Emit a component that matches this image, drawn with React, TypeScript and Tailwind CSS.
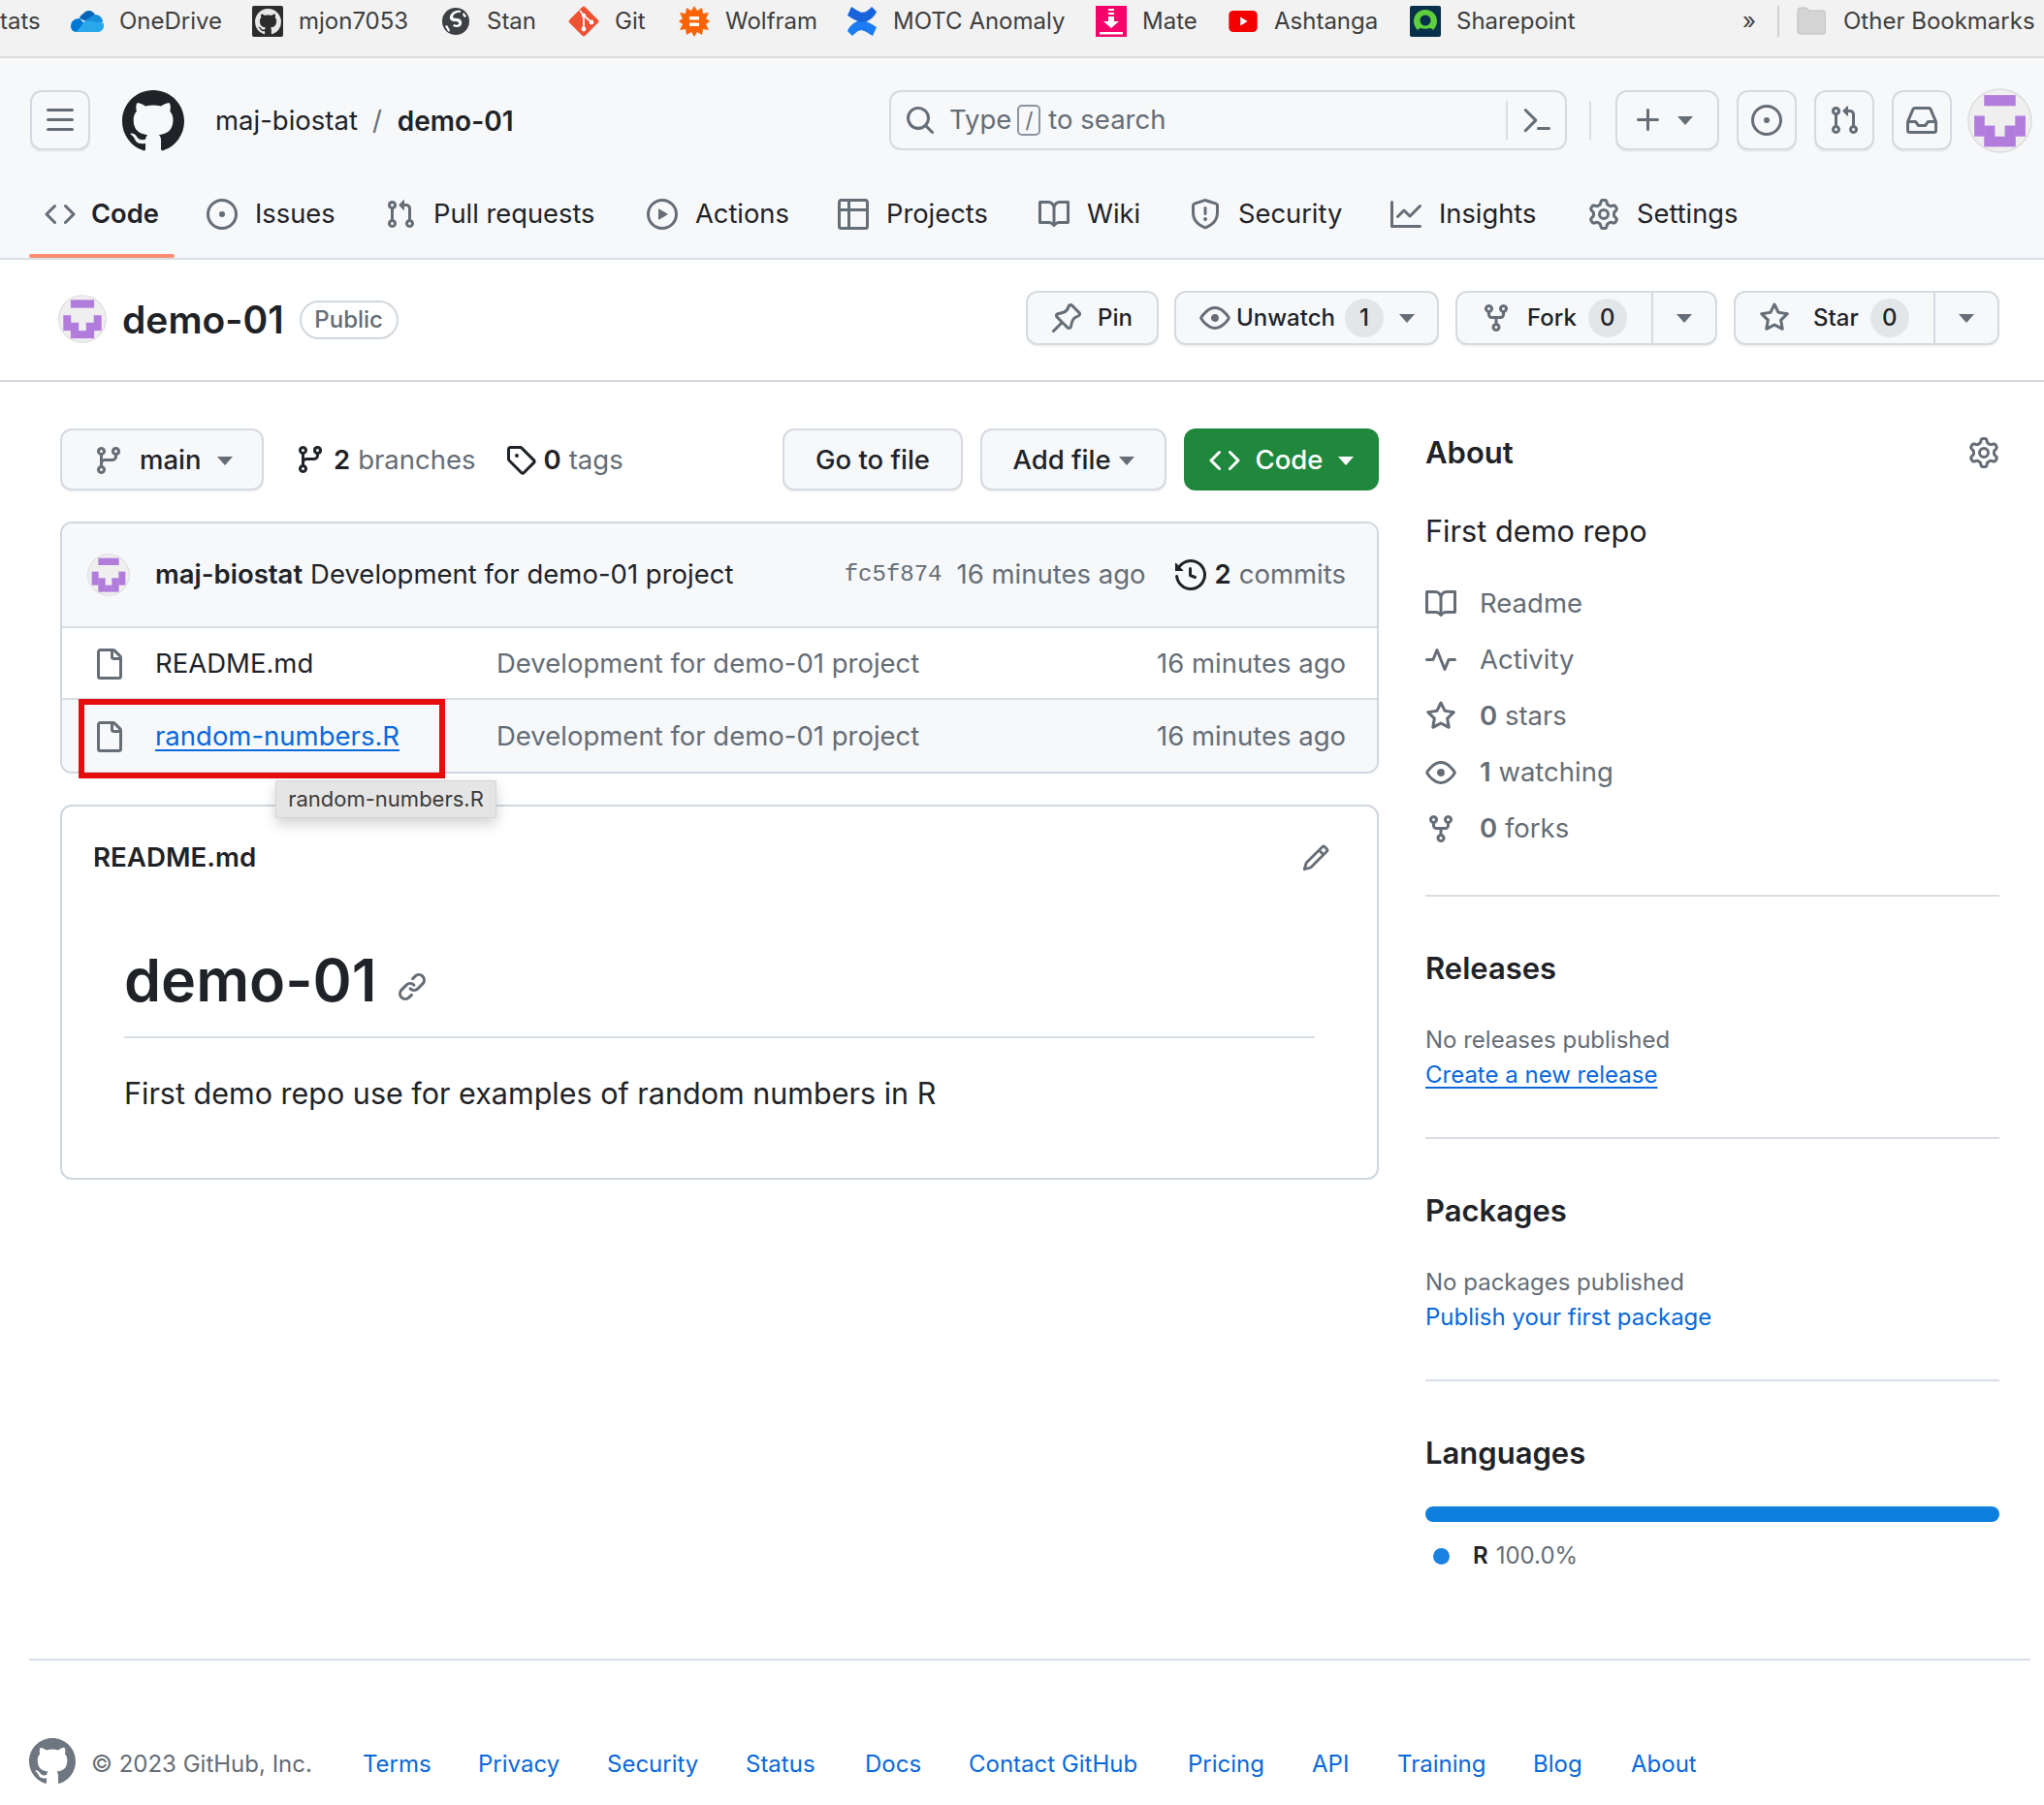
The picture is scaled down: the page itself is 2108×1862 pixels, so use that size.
import React from "react";

const font = { fontFamily: "Inter, 'Liberation Sans', sans-serif" };

const paths: Record<string, string> = {
  github: "M8 0c4.42 0 8 3.58 8 8a8.013 8.013 0 0 1-5.45 7.59c-.4.08-.55-.17-.55-.38 0-.27.01-1.13.01-2.2 0-.75-.25-1.23-.54-1.48 1.78-.2 3.65-.88 3.65-3.95 0-.88-.31-1.59-.82-2.15.08-.2.36-1.02-.08-2.12 0 0-.67-.22-2.2.82-.64-.18-1.32-.27-2-.27-.68 0-1.36.09-2 .27-1.53-1.03-2.2-.82-2.2-.82-.44 1.1-.16 1.92-.08 2.12-.51.56-.82 1.28-.82 2.15 0 3.06 1.86 3.75 3.64 3.95-.23.2-.44.55-.51 1.07-.46.21-1.61.55-2.33-.66-.15-.24-.6-.83-1.23-.82-.67.01-.27.38.01.53.34.19.73.9.82 1.13.16.45.68 1.31 2.69.94 0 .67.01 1.3.01 1.49 0 .21-.15.45-.55.38A7.995 7.995 0 0 1 0 8c0-4.42 3.58-8 8-8Z",
  bars: "M1 2.75A.75.75 0 0 1 1.75 2h12.5a.75.75 0 0 1 0 1.5H1.75A.75.75 0 0 1 1 2.75Zm0 5A.75.75 0 0 1 1.75 7h12.5a.75.75 0 0 1 0 1.5H1.75A.75.75 0 0 1 1 7.75ZM1.75 12h12.5a.75.75 0 0 1 0 1.5H1.75a.75.75 0 0 1 0-1.5Z",
  palette: "m6.354 8.04-4.773 4.773a.75.75 0 1 0 1.061 1.06L7.945 8.57a.75.75 0 0 0 0-1.06L2.642 2.206a.75.75 0 0 0-1.06 1.061L6.353 8.04ZM8.75 11.5a.75.75 0 0 0 0 1.5h5.5a.75.75 0 0 0 0-1.5h-5.5Z",
  code: "m11.28 3.22 4.25 4.25a.75.75 0 0 1 0 1.06l-4.25 4.25a.749.749 0 0 1-1.275-.326.749.749 0 0 1 .215-.734L13.94 8l-3.72-3.72a.749.749 0 0 1 .326-1.275.749.749 0 0 1 .734.215Zm-6.56 0a.751.751 0 0 1 1.042.018.751.751 0 0 1 .018 1.042L2.06 8l3.72 3.72a.749.749 0 0 1-.326 1.275.749.749 0 0 1-.734-.215L.47 8.53a.75.75 0 0 1 0-1.06Z",
  issue: "M8 9.5a1.5 1.5 0 1 0 0-3 1.5 1.5 0 0 0 0 3ZM8 0a8 8 0 1 1 0 16A8 8 0 0 1 8 0ZM1.5 8a6.5 6.5 0 1 0 13 0 6.5 6.5 0 0 0-13 0Z",
  pr: "M1.5 3.25a2.25 2.25 0 1 1 3 2.122v5.256a2.251 2.251 0 1 1-1.5 0V5.372A2.25 2.25 0 0 1 1.5 3.25Zm5.677-.177L9.573.677A.25.25 0 0 1 10 .854V2.5h1A2.5 2.5 0 0 1 13.5 5v5.628a2.251 2.251 0 1 1-1.5 0V5a1 1 0 0 0-1-1h-1v1.646a.25.25 0 0 1-.427.177L7.177 3.427a.25.25 0 0 1 0-.354ZM3.75 2.5a.75.75 0 1 0 0 1.5.75.75 0 0 0 0-1.5Zm0 9.5a.75.75 0 1 0 0 1.5.75.75 0 0 0 0-1.5Zm8.25.75a.75.75 0 1 0 1.5 0 .75.75 0 0 0-1.5 0Z",
  play: "M8 0a8 8 0 1 1 0 16A8 8 0 0 1 8 0ZM1.5 8a6.5 6.5 0 1 0 13 0 6.5 6.5 0 0 0-13 0Zm4.879-2.773 4.264 2.559a.25.25 0 0 1 0 .428l-4.264 2.559A.25.25 0 0 1 6 10.559V5.442a.25.25 0 0 1 .379-.215Z",
  table: "M0 1.75C0 .784.784 0 1.75 0h12.5C15.216 0 16 .784 16 1.75v12.5A1.75 1.75 0 0 1 14.25 16H1.75A1.75 1.75 0 0 1 0 14.25ZM6.5 6.5v8h7.75a.25.25 0 0 0 .25-.25V6.5Zm8-1.5V1.75a.25.25 0 0 0-.25-.25H6.5V5Zm-13 1.5v7.75c0 .138.112.25.25.25H5v-8ZM5 5V1.5H1.75a.25.25 0 0 0-.25.25V5Z",
  book: "M0 1.75A.75.75 0 0 1 .75 1h4.253c1.227 0 2.317.59 3 1.501A3.743 3.743 0 0 1 11.006 1h4.245a.75.75 0 0 1 .75.75v10.5a.75.75 0 0 1-.75.75h-4.507a2.25 2.25 0 0 0-1.591.659l-.622.621a.75.75 0 0 1-1.06 0l-.622-.621A2.25 2.25 0 0 0 5.258 13H.75a.75.75 0 0 1-.75-.75Zm7.251 10.324.004-5.073-.002-2.253A2.25 2.25 0 0 0 5.003 2.5H1.5v9h3.757a3.75 3.75 0 0 1 1.994.574ZM8.755 4.75l-.004 7.322a3.752 3.752 0 0 1 1.992-.572H14.5v-9h-3.495a2.25 2.25 0 0 0-2.25 2.25Z",
  shield: "M7.467.133a1.748 1.748 0 0 1 1.066 0l5.25 1.68A1.75 1.75 0 0 1 15 3.48V7c0 1.566-.32 3.182-1.303 4.682-.983 1.498-2.585 2.813-5.032 3.855a1.697 1.697 0 0 1-1.33 0c-2.447-1.042-4.049-2.357-5.032-3.855C1.32 10.182 1 8.566 1 7V3.48a1.75 1.75 0 0 1 1.217-1.667Zm.61 1.429a.25.25 0 0 0-.153 0l-5.25 1.68a.25.25 0 0 0-.174.238V7c0 1.358.275 2.666 1.057 3.86.784 1.194 2.121 2.34 4.366 3.297a.196.196 0 0 0 .154 0c2.245-.956 3.582-2.104 4.366-3.298C13.225 9.666 13.5 8.36 13.5 7V3.48a.251.251 0 0 0-.174-.237l-5.25-1.68ZM8.75 4.75v3a.75.75 0 0 1-1.5 0v-3a.75.75 0 0 1 1.5 0ZM9 10.5a1 1 0 1 1-2 0 1 1 0 0 1 2 0Z",
  graph: "M1.5 1.75V13.5h13.75a.75.75 0 0 1 0 1.5H.75a.75.75 0 0 1-.75-.75V1.75a.75.75 0 0 1 1.5 0Zm14.28 2.53-5.25 5.25a.75.75 0 0 1-1.06 0L7 7.06 4.28 9.78a.751.751 0 0 1-1.042-.018.751.751 0 0 1-.018-1.042l3.25-3.25a.75.75 0 0 1 1.06 0L10 7.94l4.72-4.72a.751.751 0 0 1 1.042.018.751.751 0 0 1 .018 1.042Z",
  gear: "M8 0a8.2 8.2 0 0 1 .701.031C9.444.095 9.99.645 10.16 1.29l.288 1.107c.018.066.079.158.212.224.231.114.454.243.668.386.123.082.233.09.299.071l1.103-.303c.644-.176 1.392.021 1.82.63.27.385.506.792.704 1.218.315.675.111 1.422-.364 1.891l-.814.806c-.049.048-.098.147-.088.294.016.257.016.515 0 .772-.01.147.038.246.088.294l.814.806c.475.469.679 1.216.364 1.891a7.977 7.977 0 0 1-.704 1.217c-.428.61-1.176.807-1.82.63l-1.102-.302c-.067-.019-.177-.011-.3.071a5.909 5.909 0 0 1-.668.386c-.133.066-.194.158-.211.224l-.29 1.106c-.168.646-.715 1.196-1.458 1.26a8.006 8.006 0 0 1-1.402 0c-.743-.064-1.289-.614-1.458-1.26l-.289-1.106c-.018-.066-.079-.158-.212-.224a5.738 5.738 0 0 1-.668-.386c-.123-.082-.233-.09-.299-.071l-1.103.303c-.644.176-1.392-.021-1.82-.63a8.12 8.12 0 0 1-.704-1.218c-.315-.675-.111-1.422.363-1.891l.815-.806c.05-.048.098-.147.088-.294a6.214 6.214 0 0 1 0-.772c.01-.147-.038-.246-.088-.294l-.815-.806C.635 6.045.431 5.298.746 4.623a7.92 7.92 0 0 1 .704-1.217c.428-.61 1.176-.807 1.82-.63l1.102.302c.067.019.177.011.3-.071.214-.143.437-.272.668-.386.133-.066.194-.158.211-.224l.29-1.106C6.009.645 6.556.095 7.299.03 7.53.01 7.764 0 8 0Zm-.571 1.525c-.036.003-.108.036-.137.146l-.289 1.105c-.147.561-.549.967-.998 1.189-.173.086-.34.183-.5.29-.417.278-.97.423-1.529.27l-1.103-.303c-.109-.03-.175.016-.195.045-.22.312-.412.644-.573.99-.014.031-.021.11.059.19l.815.806c.411.406.562.957.53 1.456a4.709 4.709 0 0 0 0 .582c.032.499-.119 1.05-.53 1.456l-.815.806c-.081.08-.073.159-.059.19.162.346.353.677.573.989.02.03.085.076.195.046l1.102-.303c.56-.153 1.113-.008 1.53.27.161.107.328.204.501.29.447.222.85.629.997 1.189l.289 1.105c.029.109.101.143.137.146a6.6 6.6 0 0 0 1.142 0c.036-.003.108-.036.137-.146l.289-1.105c.147-.561.549-.967.998-1.189.173-.086.34-.183.5-.29.417-.278.97-.423 1.529-.27l1.103.303c.109.029.175-.016.195-.045.22-.313.411-.644.573-.99.014-.031.021-.11-.059-.19l-.815-.806c-.411-.406-.562-.957-.53-1.456a4.709 4.709 0 0 0 0-.582c-.032-.499.119-1.05.53-1.456l.815-.806c.081-.08.073-.159.059-.19a6.464 6.464 0 0 0-.573-.989c-.02-.03-.085-.076-.195-.046l-1.102.303c-.56.153-1.113.008-1.53-.27a4.44 4.44 0 0 0-.501-.29c-.447-.222-.85-.629-.997-1.189l-.289-1.105c-.029-.11-.101-.143-.137-.146a6.6 6.6 0 0 0-1.142 0ZM11 8a3 3 0 1 1-6 0 3 3 0 0 1 6 0ZM9.5 8a1.5 1.5 0 1 0-3.001.001A1.5 1.5 0 0 0 9.5 8Z",
  pin: "m11.294.984 3.722 3.722a1.75 1.75 0 0 1-.504 2.826l-1.327.613a3.089 3.089 0 0 0-1.707 2.084l-.584 2.454c-.317 1.332-1.972 1.8-2.94.832L5.75 11.311 1.78 15.28a.749.749 0 0 1-1.275-.326.749.749 0 0 1 .215-.734L4.689 10.25 2.485 8.046c-.968-.968-.5-2.623.832-2.94l2.454-.584a3.08 3.08 0 0 0 2.084-1.707l.613-1.327a1.75 1.75 0 0 1 2.826-.504ZM6.283 9.723l2.797 2.797a.25.25 0 0 0 .42-.119l.584-2.454a4.586 4.586 0 0 1 2.537-3.098l1.328-.613a.25.25 0 0 0 .072-.404l-3.722-3.722a.25.25 0 0 0-.404.072l-.613 1.328a4.585 4.585 0 0 1-3.098 2.537l-2.454.584a.25.25 0 0 0-.119.42Z",
  eye: "M8 2c1.981 0 3.671.992 4.933 2.078 1.27 1.091 2.187 2.345 2.637 3.023a1.62 1.62 0 0 1 0 1.798c-.45.678-1.367 1.932-2.637 3.023C11.67 13.008 9.981 14 8 14c-1.981 0-3.671-.992-4.933-2.078C1.797 10.83.88 9.576.43 8.898a1.62 1.62 0 0 1 0-1.798c.45-.677 1.367-1.931 2.637-3.022C4.33 2.992 6.019 2 8 2ZM1.679 7.932a.12.12 0 0 0 0 .136c.411.622 1.241 1.75 2.366 2.717C5.176 11.758 6.527 12.5 8 12.5c1.473 0 2.825-.742 3.955-1.715 1.124-.967 1.954-2.096 2.366-2.717a.12.12 0 0 0 0-.136c-.412-.621-1.242-1.75-2.366-2.717C10.824 4.242 9.473 3.5 8 3.5c-1.473 0-2.825.742-3.955 1.715-1.124.967-1.954 2.096-2.366 2.717ZM8 10a2 2 0 1 1-.001-3.999A2 2 0 0 1 8 10Z",
  fork: "M5 5.372v.878c0 .414.336.75.75.75h4.5a.75.75 0 0 0 .75-.75v-.878a2.25 2.25 0 1 1 1.5 0v.878a2.25 2.25 0 0 1-2.25 2.25h-1.5v2.128a2.251 2.251 0 1 1-1.5 0V8.5h-1.5A2.25 2.25 0 0 1 3.5 6.25v-.878a2.25 2.25 0 1 1 1.5 0ZM5 3.25a.75.75 0 1 0-1.5 0 .75.75 0 0 0 1.5 0Zm6.75.75a.75.75 0 1 0 0-1.5.75.75 0 0 0 0 1.5Zm-3 8.75a.75.75 0 1 0-1.5 0 .75.75 0 0 0 1.5 0Z",
  star: "M8 .25a.75.75 0 0 1 .673.418l1.882 3.815 4.21.612a.75.75 0 0 1 .416 1.279l-3.046 2.97.719 4.192a.751.751 0 0 1-1.088.791L8 12.347l-3.766 1.98a.75.75 0 0 1-1.088-.79l.72-4.194L.818 6.374a.75.75 0 0 1 .416-1.28l4.21-.611L7.327.668A.75.75 0 0 1 8 .25Zm0 2.445L6.615 5.5a.75.75 0 0 1-.564.41l-3.097.45 2.24 2.184a.75.75 0 0 1 .216.664l-.528 3.084 2.769-1.456a.75.75 0 0 1 .698 0l2.77 1.456-.53-3.084a.75.75 0 0 1 .216-.664l2.24-2.183-3.096-.45a.75.75 0 0 1-.564-.41L8 2.694Z",
  branch: "M9.5 3.25a2.25 2.25 0 1 1 3 2.122V6A2.5 2.5 0 0 1 10 8.5H6a1 1 0 0 0-1 1v1.128a2.251 2.251 0 1 1-1.5 0V5.372a2.25 2.25 0 1 1 1.5 0v1.836A2.493 2.493 0 0 1 6 7h4a1 1 0 0 0 1-1v-.628A2.25 2.25 0 0 1 9.5 3.25Zm-6 0a.75.75 0 1 0 1.5 0 .75.75 0 0 0-1.5 0Zm8.25-.75a.75.75 0 1 0 0 1.5.75.75 0 0 0 0-1.5ZM4.25 12a.75.75 0 1 0 0 1.5.75.75 0 0 0 0-1.5Z",
  tag: "M1 7.775V2.75C1 1.784 1.784 1 2.75 1h5.025c.464 0 .91.184 1.238.513l6.25 6.25a1.75 1.75 0 0 1 0 2.474l-5.026 5.026a1.75 1.75 0 0 1-2.474 0l-6.25-6.25A1.752 1.752 0 0 1 1 7.775Zm1.5 0c0 .066.026.13.073.177l6.25 6.25a.25.25 0 0 0 .354 0l5.025-5.025a.25.25 0 0 0 0-.354l-6.25-6.25a.25.25 0 0 0-.177-.073H2.75a.25.25 0 0 0-.25.25ZM6 5a1 1 0 1 1 0 2 1 1 0 0 1 0-2Z",
  history: "m.427 1.927 1.215 1.215a8.002 8.002 0 1 1-1.6 5.685.75.75 0 1 1 1.493-.154 6.5 6.5 0 1 0 1.18-4.458l1.358 1.358A.25.25 0 0 1 3.896 6H.25A.25.25 0 0 1 0 5.75V2.104a.25.25 0 0 1 .427-.177ZM7.75 4a.75.75 0 0 1 .75.75v2.992l2.028.812a.75.75 0 0 1-.557 1.392l-2.5-1A.751.751 0 0 1 7 8.25v-3.5A.75.75 0 0 1 7.75 4Z",
  file: "M2 1.75C2 .784 2.784 0 3.75 0h6.586c.464 0 .909.184 1.237.513l2.914 2.914c.329.328.513.773.513 1.237v9.586A1.75 1.75 0 0 1 13.25 16h-9.5A1.75 1.75 0 0 1 2 14.25Zm1.75-.25a.25.25 0 0 0-.25.25v12.5c0 .138.112.25.25.25h9.5a.25.25 0 0 0 .25-.25V6h-2.75A1.75 1.75 0 0 1 9 4.25V1.5Zm6.75.062V4.25c0 .138.112.25.25.25h2.688l-.011-.013-2.914-2.914-.013-.011Z",
  pencil: "M11.013 1.427a1.75 1.75 0 0 1 2.474 0l1.086 1.086a1.75 1.75 0 0 1 0 2.474l-8.61 8.61c-.21.21-.47.364-.756.445l-3.251.93a.75.75 0 0 1-.927-.928l.929-3.25c.081-.286.235-.547.445-.758l8.61-8.61Zm.176 4.823L9.75 4.81l-6.286 6.287a.253.253 0 0 0-.064.108l-.558 1.953 1.953-.558a.253.253 0 0 0 .108-.064Zm1.238-3.763a.25.25 0 0 0-.354 0L10.811 3.75l1.439 1.44 1.263-1.263a.25.25 0 0 0 0-.354Z",
  link: "m7.775 3.275 1.25-1.25a3.5 3.5 0 1 1 4.95 4.95l-2.5 2.5a3.5 3.5 0 0 1-4.95 0 .751.751 0 0 1 .018-1.042.751.751 0 0 1 1.042-.018 1.998 1.998 0 0 0 2.83 0l2.5-2.5a2.002 2.002 0 0 0-2.83-2.83l-1.25 1.25a.751.751 0 0 1-1.042-.018.751.751 0 0 1-.018-1.042Zm-4.69 9.64a1.998 1.998 0 0 0 2.83 0l1.25-1.25a.751.751 0 0 1 1.042.018.751.751 0 0 1 .018 1.042l-1.25 1.25a3.5 3.5 0 1 1-4.95-4.95l2.5-2.5a3.5 3.5 0 0 1 4.95 0 .751.751 0 0 1-.018 1.042.751.751 0 0 1-1.042.018 1.998 1.998 0 0 0-2.83 0l-2.5 2.5a1.998 1.998 0 0 0 0 2.83Z",
  pulse: "M6 2c.306 0 .582.187.696.471L10 10.731l1.304-3.26A.751.751 0 0 1 12 7h3.25a.75.75 0 0 1 0 1.5h-2.742l-1.812 4.528a.751.751 0 0 1-1.392 0L6 4.77 4.696 8.03A.75.75 0 0 1 4 8.5H.75a.75.75 0 0 1 0-1.5h2.742l1.812-4.529A.751.751 0 0 1 6 2Z",
  search: "M10.68 11.74a6 6 0 0 1-7.922-8.982 6 6 0 0 1 8.982 7.922l3.04 3.04a.749.749 0 0 1-.326 1.275.749.749 0 0 1-.734-.215ZM11.5 7a4.499 4.499 0 1 0-8.997 0A4.499 4.499 0 0 0 11.5 7Z",
  plus: "M7.75 2a.75.75 0 0 1 .75.75V7h4.25a.75.75 0 0 1 0 1.5H8.5v4.25a.75.75 0 0 1-1.5 0V8.5H2.75a.75.75 0 0 1 0-1.5H7V2.75A.75.75 0 0 1 7.75 2Z",
  inbox: "M2.8 2.06A1.75 1.75 0 0 1 4.41 1h7.18c.7 0 1.333.417 1.61 1.06l2.74 6.395c.04.093.06.194.06.295v4.5A1.75 1.75 0 0 1 14.25 15H1.75A1.75 1.75 0 0 1 0 13.25v-4.5c0-.101.02-.202.06-.295Zm1.61.44a.25.25 0 0 0-.23.152L1.887 8H4.75a.75.75 0 0 1 .6.3L6.625 10h2.75l1.275-1.7a.75.75 0 0 1 .6-.3h2.863L11.82 2.652a.25.25 0 0 0-.23-.152Zm10.09 7h-2.875l-1.275 1.7a.75.75 0 0 1-.6.3h-3.5a.75.75 0 0 1-.6-.3L4.375 9.5H1.5v3.75c0 .138.112.25.25.25h12.5a.25.25 0 0 0 .25-.25Z",
};

function Oct({ name, size = 32, className = "" }: { name: string; size?: number; className?: string }) {
  return (
    <svg viewBox="0 0 16 16" width={size} height={size} className={`shrink-0 ${className}`} fill="currentColor" fillRule="evenodd">
      <path d={paths[name]} />
    </svg>
  );
}

function Caret({ className = "border-t-[#656d76]" }: { className?: string }) {
  return <span className={`inline-block w-0 h-0 border-x-[8px] border-x-transparent border-t-[9px] ${className}`} />;
}

function Identicon({ className }: { className: string }) {
  return (
    <svg viewBox="0 0 66 66" className={className}>
      <circle cx="33" cy="33" r="32" fill="#f0eff0" stroke="#dcdcdc" strokeWidth="1.5" />
      <g fill="#b27cdc">
        <rect x="17" y="7" width="32" height="11" />
        <rect x="7" y="28" width="10.5" height="21" />
        <rect x="17" y="38" width="11" height="21.5" />
        <rect x="27.5" y="49" width="11" height="10.5" />
        <rect x="38" y="38" width="11" height="21.5" />
        <rect x="48.5" y="28" width="10.5" height="21" />
      </g>
    </svg>
  );
}

const bookmarks = [
  { w: "w-[187px]", label: "OneDrive", icon: (
    <svg viewBox="0 0 34 24" className="w-[34px] h-[24px]"><path d="M13 4c3-4 9-4 12 1l-9 7-7-3c0-2 2-4 4-5z" fill="#0364b8"/><path d="M9 9c-5 0-9 3-9 8 0 3 2 6 6 6l9-8z" fill="#0078d4"/><path d="M25 5c5 0 8 4 8 8l-10 3-8-5z" fill="#1490df"/><path d="M15 11l19 3c1 5-2 9-6 9H6z" fill="#28a8ea"/></svg>
  ) },
  { w: "w-[196px]", label: "mjon7053", icon: (
    <span className="w-[32px] h-[32px] bg-[#2c2c2c] rounded-[2px] flex items-center justify-center text-[#e8e8e8]"><Oct name="github" size={27} /></span>
  ) },
  { w: "w-[130px]", label: "Stan", icon: (
    <svg viewBox="0 0 28 28" className="w-[28px] h-[28px] mr-[2px]"><circle cx="14" cy="14" r="14" fill="#3d4044"/><path d="M19 3c-5-1-10 2-11 6-1 3 2 5 5 5 3 0 5 1 4 3-1 1-3 1-5 0l-1 2c4 2 8 1 9-2 1-4-2-6-5-6-3 0-4-1-4-2 1-3 5-5 8-4z" fill="#fff"/><path d="M3 19c2 3 2 4 4 6l1-2-3-5zM25 9c-1-2-2-3-3-4l-1 2 2 3z" fill="#fff"/></svg>
  ) },
  { w: "w-[114px]", label: "Git", icon: (
    <svg viewBox="0 0 32 32" className="w-[32px] h-[32px]"><rect x="4.5" y="4.5" width="23" height="23" rx="2.5" transform="rotate(45 16 16)" fill="#f05033"/><path d="M12 5l4 5 8 7M16 10v14" stroke="#fff" strokeWidth="1.8" fill="none"/><circle cx="16" cy="24" r="2.4" fill="#fff"/><circle cx="16" cy="10" r="2.2" fill="#fff"/><circle cx="24" cy="17" r="2.4" fill="#fff"/></svg>
  ) },
  { w: "w-[173px]", label: "Wolfram", icon: (
    <svg viewBox="0 0 32 32" className="w-[32px] h-[32px]"><polygon points="16,0 19,5 24,2 25,8 31,7 28,13 32,16 28,19 31,25 25,24 24,30 19,27 16,32 13,27 8,30 7,24 1,25 4,19 0,16 4,13 1,7 7,8 8,2 13,5" fill="#f96306"/><rect x="11" y="11" width="10" height="3.5" fill="#fff"/><rect x="11" y="17.5" width="10" height="3.5" fill="#fff"/></svg>
  ) },
  { w: "w-[257px]", label: "MOTC Anomaly", icon: (
    <svg viewBox="0 0 32 32" className="w-[32px] h-[32px]"><path d="M1 26c1-3 5-8 10-10 6-2 11 0 20 6l-4 9c-8-5-11-7-15-5-3 2-5 4-6 5z" fill="#1a7bf2"/><path d="M31 6c-1 3-5 8-10 10-6 2-11 0-20-6l4-9c8 5 11 7 15 5 3-2 5-4 6-5z" fill="#1763dc"/></svg>
  ) },
  { w: "w-[136px]", label: "Mate", icon: (
    <svg viewBox="0 0 32 32" className="w-[32px] h-[32px]"><rect width="32" height="32" fill="#f5056b"/><path d="M13 3h6v2h-6zM13 7h6v2h-6zM13 11h6v5h5l-8 7-8-7h5z" fill="#fff"/><rect x="4" y="27" width="24" height="2.5" fill="#fff"/></svg>
  ) },
  { w: "w-[188px]", label: "Ashtanga", icon: (
    <svg viewBox="0 0 32 24" className="w-[32px] h-[22px]"><rect width="32" height="24" rx="5" fill="#f40000"/><polygon points="13,7 13,17 21,12" fill="#fff"/></svg>
  ) },
  { w: "w-[343px]", label: "Sharepoint", icon: (
    <svg viewBox="0 0 32 32" className="w-[32px] h-[32px]"><rect width="32" height="32" rx="2" fill="#07304a"/><path d="M16 4c-7 0-12 5-12 12 0 4 2 7 4 9 1-1 2-2 3-2 3 1 7 1 10 0 1 0 2 1 3 2 2-2 4-5 4-9 0-7-5-12-12-12z" fill="#5fce3c"/><circle cx="16" cy="15" r="5.5" fill="#07304a"/></svg>
  ) },
];

const tabs = [
  { w: "w-[167px]", label: "Code", icon: "code" },
  { w: "w-[184px]", label: "Issues", icon: "issue" },
  { w: "w-[270px]", label: "Pull requests", icon: "pr" },
  { w: "w-[197px]", label: "Actions", icon: "play" },
  { w: "w-[207px]", label: "Projects", icon: "table" },
  { w: "w-[156px]", label: "Wiki", icon: "book" },
  { w: "w-[207px]", label: "Security", icon: "shield" },
  { w: "w-[204px]", label: "Insights", icon: "graph" },
  { w: "w-[170px]", label: "Settings", icon: "gear" },
];

const footerLinks = [
  { w: "w-[119px]", label: "Terms" },
  { w: "w-[133px]", label: "Privacy" },
  { w: "w-[143px]", label: "Security" },
  { w: "w-[123px]", label: "Status" },
  { w: "w-[107px]", label: "Docs" },
  { w: "w-[226px]", label: "Contact GitHub" },
  { w: "w-[128px]", label: "Pricing" },
  { w: "w-[88px]", label: "API" },
  { w: "w-[140px]", label: "Training" },
  { w: "w-[101px]", label: "Blog" },
  { w: "w-[80px]", label: "About" },
];

const btn = "border-2 border-[#d5dae0] bg-[#f6f8fa] rounded-[12px] shadow-[0_2px_0_rgba(31,35,40,0.05)] flex items-center";

function HeaderIconBtn({ children }: { children: React.ReactNode }) {
  return <div className={`${btn} w-[62px] h-[62px] justify-center text-[#656d76]`}>{children}</div>;
}

function Count({ n }: { n: string }) {
  return <span className="w-[40px] h-[40px] rounded-full bg-[#e3e6e8] flex items-center justify-center text-[24px] font-medium text-[#1f2328]">{n}</span>;
}

function SideStat({ icon, children }: { icon: string; children: React.ReactNode }) {
  return (
    <div className="h-[58px] flex items-center text-[#656d76] text-[27.5px]">
      <span className="w-[32px] flex justify-center"><Oct name={icon} /></span>
      <span className="ml-[24px]">{children}</span>
    </div>
  );
}

function Section({ title, children }: { title: string; children: React.ReactNode }) {
  return (
    <div className="border-t-2 border-[#d8dee4] h-[250px] pt-[54px]">
      <div className="text-[31px] leading-[40px] font-semibold text-[#1f2328]">{title}</div>
      {children}
    </div>
  );
}

export default function App() {
  return (
    <div className="w-[2108px] h-[1862px] bg-white overflow-hidden text-[#1f2328] relative" style={font}>
      {/* bookmarks */}
      <div className="h-[60px] bg-[#f2f2f2] border-b-[2px] border-[#dcdcdc] flex items-start pt-[6px] text-[24px] leading-[32px] text-[#3e3e3e] whitespace-nowrap">
        <div className="w-[73px] shrink-0"><span>tats</span></div>
        {bookmarks.map((b) => (
          <div key={b.label} className={`${b.w} flex items-center gap-[16px] shrink-0`}>
            <span className="shrink-0 flex items-center justify-center">{b.icon}</span>
            <span>{b.label}</span>
          </div>
        ))}
        <span className="w-[36px] text-[24px]">»</span>
        <span className="w-[2px] h-[32px] bg-[#cfcfcf]" />
        <svg viewBox="0 0 30 30" className="w-[30px] h-[30px] ml-[18px] mr-[18px] shrink-0"><path d="M1 5c0-2 1-3 3-3h6l3 3h14c2 0 3 1 3 3v19c0 1-1 2-3 2H4c-2 0-3-1-3-2z" fill="#d4d4d4" stroke="#bdbdbd"/></svg>
        <span>Other Bookmarks</span>
      </div>

      {/* github header */}
      <div className="h-[208px] bg-[#f6f8fa] border-b-2 border-[#d8dee4] flex flex-col">
        <div className="h-[147px] pt-[33px] pl-[31px] flex items-start shrink-0">
          <HeaderIconBtn><Oct name="bars" /></HeaderIconBtn>
          <Oct name="github" size={64} className="ml-[33px] text-[#1f2328]" />
          <div className="ml-[32px] h-[62px] pt-[2px] flex items-center text-[27.5px]">
            <span>maj-biostat</span>
            <span className="ml-[15px] mr-[16px] text-[#656d76]">/</span>
            <span className="font-semibold text-[28px]">demo-01</span>
          </div>
          <div className="ml-auto w-[699px] h-[62px] border-2 border-[#d5dae0] rounded-[12px] flex items-center pl-[14px] pr-[13px] text-[#656d76] text-[27.5px]">
            <Oct name="search" />
            <span className="ml-[14px]">Type</span>
            <span className="ml-[6px] mr-[8px] w-[24px] h-[32px] border-2 border-[#8c959f] rounded-[5px] flex items-center justify-center text-[22px] leading-none">/</span>
            <span>to search</span>
            <span className="ml-auto w-[2px] h-[40px] bg-[#d8dee4]" />
            <Oct name="palette" className="ml-[14px]" />
          </div>
          <span className="ml-[23px] mr-[25px] mt-[11px] w-[2px] h-[40px] bg-[#d8dee4]" />
          <div className={`${btn} w-[107px] h-[62px] pl-[16px] gap-[14px] text-[#656d76]`}><Oct name="plus" /><Caret /></div>
          <div className="ml-[18px] flex gap-[18px]">
            <HeaderIconBtn><Oct name="issue" /></HeaderIconBtn>
            <HeaderIconBtn><Oct name="pr" /></HeaderIconBtn>
            <HeaderIconBtn><Oct name="inbox" /></HeaderIconBtn>
          </div>
          <Identicon className="w-[67px] h-[67px] ml-[16px] mr-[12px] mt-[-2px] shrink-0" />
        </div>
        <div className="flex h-[59px] pl-[30px] items-start">
          {tabs.map((t, i) => (
            <div key={t.label} className={`${t.w} shrink-0 relative`}>
              <div className={`flex items-center text-[27.3px] h-[28px] ${i === 0 ? "pl-[16px] gap-[16px] font-semibold" : "ml-[16px] gap-[18px]"}`}>
                <Oct name={t.icon} className="text-[#656d76]" />
                <span>{t.label}</span>
              </div>
              {i === 0 && <span className="absolute left-0 top-[55px] w-[150px] h-[4px] rounded-[2px] bg-[#fd8c73]" />}
            </div>
          ))}
        </div>
      </div>

      {/* repo head */}
      <div className="h-[126px] border-b-2 border-[#d5dae0] flex items-start pt-[32px] pl-[60px] pr-[46px]">
        <Identicon className="w-[50px] h-[52px] mt-[3px] shrink-0" />
        <span className="ml-[16px] mt-[2px] text-[39px] leading-[56px] font-semibold">demo-01</span>
        <span className="ml-[16px] mt-[10px] w-[102px] h-[40px] border-2 border-[#d0d7de] rounded-full flex items-center justify-center text-[24px] font-medium text-[#656d76]">Public</span>
        <div className={`${btn} ml-auto w-[137px] h-[56px] pl-[24px] gap-[16px] text-[24px] font-medium`}><Oct name="pin" className="text-[#656d76]" />Pin</div>
        <div className={`${btn} ml-[16px] w-[273px] h-[56px] pl-[24px] text-[24px] font-medium`}><Oct name="eye" className="text-[#656d76]" /><span className="ml-[6px]">Unwatch</span><span className="ml-[10px]"><Count n="1" /></span><span className="ml-[16px] flex"><Caret /></span></div>
        <div className={`${btn} ml-[17px] w-[270px] h-[56px] pl-[24px] text-[24px] font-medium`}>
          <Oct name="fork" className="text-[#656d76]" /><span className="ml-[16px]">Fork</span><span className="ml-[12px]"><Count n="0" /></span>
          <span className="ml-[25px] w-[2px] h-full bg-[#d5dae0]" /><span className="ml-[24px] flex"><Caret /></span>
        </div>
        <div className={`${btn} ml-[17px] w-[274px] h-[56px] pl-[24px] text-[24px] font-medium`}>
          <Oct name="star" className="text-[#656d76]" /><span className="ml-[24px]">Star</span><span className="ml-[12px]"><Count n="0" /></span>
          <span className="ml-[25px] w-[2px] h-full bg-[#d5dae0]" /><span className="ml-[24px] flex"><Caret /></span>
        </div>
      </div>

      {/* main */}
      <div className="flex pl-[62px] pr-[46px] pt-[48px]">
        <div className="w-[1360px] shrink-0">
          <div className="flex items-center h-[64px] text-[27.5px]">
            <div className={`${btn} w-[210px] h-[64px] pl-[32px] pt-[2px] font-medium`}><Oct name="branch" className="text-[#656d76]" /><span className="ml-[16px]">main</span><span className="ml-[16px] flex"><Caret /></span></div>
            <Oct name="branch" className="ml-[32px]" />
            <span className="ml-[8px] mt-[2px] font-semibold">2</span><span className="ml-[8px] mt-[2px] text-[#656d76]">branches</span>
            <Oct name="tag" className="ml-[30px]" />
            <span className="ml-[8px] mt-[2px] font-semibold">0</span><span className="ml-[8px] mt-[2px] text-[#656d76]">tags</span>
            <div className={`${btn} ml-auto w-[186px] h-[64px] pt-[2px] justify-center font-medium`}>Go to file</div>
            <div className={`${btn} ml-[18px] w-[192px] h-[64px] pt-[2px] justify-center font-medium gap-[8px]`}>Add file<Caret /></div>
            <div className="ml-[18px] w-[201px] h-[64px] pt-[2px] rounded-[12px] bg-[#1f883d] text-white font-medium flex items-center justify-center gap-[16px]"><Oct name="code" />Code<Caret className="border-t-white" /></div>
          </div>

          <div className="mt-[32px] border-2 border-[#d0d7de] rounded-[12px] relative">
            <div className="h-[108px] bg-[#f6f8fa] border-b-2 border-[#d8dee4] rounded-t-[10px] flex items-center pl-[26px] pr-[32px] text-[27.5px]">
              <Identicon className="w-[44px] h-[44px] shrink-0" />
              <span className="ml-[26px] font-semibold">maj-biostat</span>
              <span className="ml-[8px]">Development for demo-01 project</span>
              <span className="ml-auto text-[24px] text-[#656d76]" style={{ fontFamily: "'Liberation Mono', monospace" }}>fc5f874</span>
              <span className="ml-[15px] text-[#656d76]">16 minutes ago</span>
              <Oct name="history" className="ml-[30px]" />
              <span className="ml-[9px] font-semibold">2</span><span className="ml-[8px] text-[#656d76]">commits</span>
            </div>
            <div className="h-[74px] border-b-2 border-[#d8dee4] flex items-center pt-[2px] pl-[32px] pr-[32px] text-[27.5px]">
              <Oct name="file" className="text-[#656d76]" />
              <span className="ml-[32px] w-[352px]">README.md</span>
              <span className="text-[#656d76]">Development for demo-01 project</span>
              <span className="ml-auto text-[#656d76]">16 minutes ago</span>
            </div>
            <div className="h-[74px] bg-[#f6f8fa] rounded-b-[10px] flex items-center pt-[2px] pl-[32px] pr-[32px] text-[27.5px]">
              <Oct name="file" className="text-[#656d76]" />
              <span className="ml-[32px] w-[352px] text-[#0969da]"><span className="underline underline-offset-[4px]">random-numbers.R</span></span>
              <span className="text-[#656d76]">Development for demo-01 project</span>
              <span className="ml-auto text-[#656d76]">16 minutes ago</span>
            </div>
            <div className="absolute left-[17px] top-[181px] w-[378px] h-[82px] border-[6px] border-[#e60d0d]" />
            <div className="absolute left-[220px] top-[265px] z-10 w-[228px] h-[39px] bg-[#e5e5e5] border border-[#d4d4d4] rounded-[2px] shadow-[0_6px_14px_rgba(0,0,0,0.18)] flex items-center justify-center text-[22px] text-[#3b3b3b]">random-numbers.R</div>
          </div>

          <div className="mt-[32px] h-[387px] border-2 border-[#d0d7de] rounded-[12px] pt-[33px] px-[32px]">
            <div className="flex items-center justify-between h-[40px] pr-[16px]">
              <span className="text-[27.7px] font-semibold">README.md</span>
              <Oct name="pencil" size={30} className="text-[#656d76]" />
            </div>
            <div className="mt-[51px] pl-[32px] pr-[32px]">
              <div className="h-[115px] border-b-2 border-[#d8dee4] flex items-start">
                <span className="mt-[11px] text-[61px] leading-[88px] font-semibold">demo-01</span>
                <Oct name="link" className="ml-[20px] mt-[46px] text-[#656d76]" />
              </div>
              <div className="mt-[35px] text-[30.5px] leading-[44px]">First demo repo use for examples of random numbers in R</div>
            </div>
          </div>
        </div>

        {/* sidebar */}
        <div className="ml-[48px] w-[592px] shrink-0 relative">
          <div className="h-[481px] pt-[5px]">
            <div className="flex items-center justify-between h-[40px]">
              <span className="text-[31px] font-semibold">About</span>
              <Oct name="gear" className="text-[#656d76]" />
            </div>
            <div className="mt-[41px] text-[30.7px] leading-[40px]">First demo repo</div>
            <div className="mt-[26px]">
              <SideStat icon="book">Readme</SideStat>
              <SideStat icon="pulse">Activity</SideStat>
              <SideStat icon="star"><b className="font-semibold">0</b> stars</SideStat>
              <SideStat icon="eye"><b className="font-semibold">1</b> watching</SideStat>
              <SideStat icon="fork"><b className="font-semibold">0</b> forks</SideStat>
            </div>
          </div>
          <Section title="Releases">
            <div className="mt-[36px] text-[24px] leading-[36px] text-[#656d76]">No releases published</div>
            <div className="text-[24px] leading-[36px] text-[#0969da]"><span className="underline underline-offset-[4px]">Create a new release</span></div>
          </Section>
          <Section title="Packages">
            <div className="mt-[36px] text-[24px] leading-[36px] text-[#656d76]">No packages published</div>
            <div className="text-[24px] leading-[36px] text-[#0969da]">Publish your first package</div>
          </Section>
          <div className="border-t-2 border-[#d8dee4] pt-[54px]">
            <div className="text-[31px] leading-[40px] font-semibold">Languages</div>
            <div className="mt-[35px] h-[16px] rounded-full bg-[#0f7fde]" />
            <div className="mt-[23px] flex items-center h-[24px] pl-[8px] text-[24px]">
              <span className="w-[17px] h-[17px] rounded-full bg-[#1a82e2]" />
              <span className="ml-[24px] font-semibold">R</span>
              <span className="ml-[8px] text-[#656d76]">100.0%</span>
            </div>
          </div>
        </div>
      </div>

      {/* footer */}
      <div className="absolute left-[30px] right-[14px] top-[1711px] border-t-2 border-[#d8dee4] pt-[80px] flex items-center text-[24px]">
        <Oct name="github" size={48} className="text-[#6e7781]" />
        <span className="ml-[16px] mt-[5px] w-[280px] text-[#656d76]">© 2023 GitHub, Inc.</span>
        {footerLinks.map((l) => (
          <span key={l.label} className={`${l.w} mt-[5px] shrink-0 text-[#0969da]`}>{l.label}</span>
        ))}
      </div>
    </div>
  );
}
